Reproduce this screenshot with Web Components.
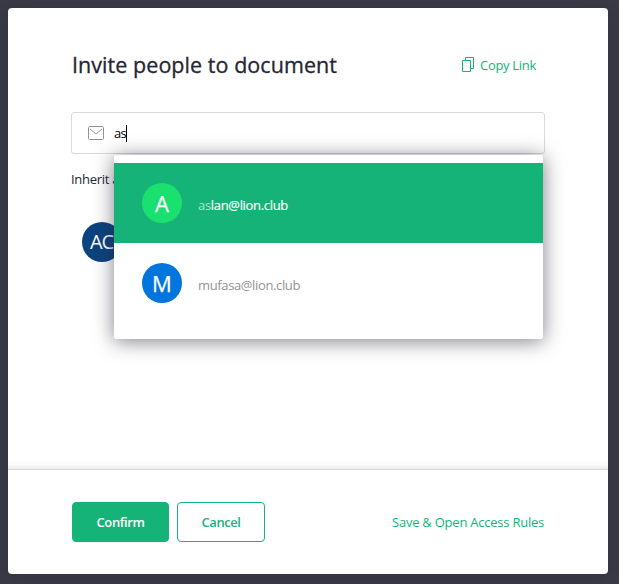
<!DOCTYPE html>
<html lang="en">
<head>
<meta charset="utf-8">
<title>Invite people to document</title>
<style>
body{margin:0;height:584px;overflow:hidden;background:#3b3a47;font:13px/18px "Open Sans","Noto Sans",sans-serif;color:#262633;--green:#16b378}
</style>
</head>
<body>
<invite-dialog></invite-dialog>
<script>
const define=(name,html,init)=>customElements.define(name,class extends HTMLElement{
  connectedCallback(){
    if(this.shadowRoot)return;
    const t=document.createElement('template');
    t.innerHTML=html;
    this.attachShadow({mode:'open'}).append(t.content.cloneNode(true));
    if(init)init.call(this,this.shadowRoot);
  }
});

// A single line of text, tracked so that it fills the given width.
define('fit-text',`<style>
:host{display:inline-block;white-space:pre}
span{display:inline-block}
</style><span><slot></slot></span>`,function(root){
  const span=root.querySelector('span');
  const target=+this.getAttribute('width');
  const natural=span.getBoundingClientRect().width;
  span.style.letterSpacing=(target-natural)/this.textContent.length+'px';
  this.style.width=target+'px';
});

define('user-avatar',`<style>
:host{display:flex;flex:none;align-items:center;justify-content:center;box-sizing:border-box;width:40px;height:40px;border-radius:50%;background:var(--tint);color:#fff;font-size:22px;line-height:40px;-webkit-text-stroke:.25px}
:host([pair]){font-size:20px;letter-spacing:-1px;padding-right:1px;-webkit-text-stroke:0}
</style><slot></slot>`);

define('copy-link',`<style>
:host{display:flex;align-items:center;gap:5px;color:var(--green)}
svg{display:block}
</style><svg width="13" height="16" viewBox="0 0 13 16" fill="none" stroke="currentColor"><path d="M.5 3.500h8v11h-8zM3.500 3.500v-3h8v11h-3"/></svg><fit-text width="56">Copy Link</fit-text>`);

define('email-field',`<style>
:host{display:flex;align-items:center;box-sizing:border-box;width:474px;height:42px;border:1px solid #d9d9d9;border-radius:3px;padding-left:16px;color:#000}
svg{display:block;margin-right:10px}
i{width:1px;height:17px;background:#000}
</style><svg width="16" height="14" viewBox="0 0 16 14" fill="none" stroke="#929299"><rect x=".5" y=".5" width="15" height="13" rx="1"/><path d="M2 3l6 5 6-5"/></svg><fit-text width="12">as</fit-text><i></i>`);

define('suggestion-row',`<style>
:host{display:flex;height:80px;box-sizing:border-box;padding:20px 28px;gap:16px;color:#929299}
:host([selected]){background:var(--green);color:#fff}
</style><slot name="avatar"></slot><div style="padding-top:13px"><slot></slot></div>`);

define('suggestion-menu',`<style>
:host{display:block;position:absolute;z-index:1;left:106px;top:147px;width:429px;height:184px;box-sizing:border-box;padding-top:8px;background:#fff;border-radius:2px;box-shadow:0 2px 20px 0 rgba(38,38,51,.6)}
b{font-weight:400;color:#aee6cf}
strong{font-weight:400;-webkit-text-stroke:.15px}
</style>
<suggestion-row selected><user-avatar slot="avatar" style="--tint:#1ae070">A</user-avatar><fit-text width="90"><b>as</b><strong>lan@lion.club</strong></fit-text></suggestion-row>
<suggestion-row><user-avatar slot="avatar" style="--tint:#0075dd">M</user-avatar><fit-text width="102">mufasa@lion.club</fit-text></suggestion-row>`);

define('action-button',`<style>
:host{display:flex;align-items:center;justify-content:center;box-sizing:border-box;height:40px;border:1px solid var(--green);border-radius:4px;color:var(--green);font-weight:600}
:host([primary]){background:var(--green);color:#fff}
</style><slot></slot>`);

define('invite-dialog',`<style>
:host{display:flex;flex-direction:column;position:relative;box-sizing:border-box;width:600px;height:566px;margin:8px;border-radius:4px;background:#fff;box-shadow:0 2px 18px rgba(31,37,50,.31)}
main{flex:1;padding:0 63px;box-shadow:inset 0 -8px 8px -7px rgba(0,0,0,.12)}
header{display:flex;justify-content:space-between;align-items:center;height:104px;padding:10px 9px 0 1px;box-sizing:border-box}
h1{margin:0;font-size:21.5px;line-height:30px;font-weight:400;-webkit-text-stroke:.3px}
.inherit{margin-top:16px;height:20px}
.member{padding:32px 11px 0}
footer{display:flex;gap:8px;height:105px;box-sizing:border-box;border-top:1px solid #d9d9d9;padding:32px 64px}
.rules{margin-left:auto;height:40px;display:flex;align-items:center;color:var(--green)}
</style>
<main>
<header><h1><fit-text width="265">Invite people to document</fit-text></h1><copy-link></copy-link></header>
<email-field></email-field>
<div class="inherit"><fit-text width="79">Inherit access</fit-text></div>
<div class="member"><user-avatar pair style="--tint:#0b437f">AC</user-avatar></div>
</main>
<footer><action-button primary style="width:97px"><fit-text width="48">Confirm</fit-text></action-button><action-button style="width:88px"><fit-text width="39">Cancel</fit-text></action-button><div class="rules"><fit-text width="152">Save &amp; Open Access Rules</fit-text></div></footer>
<suggestion-menu></suggestion-menu>`);
</script>
</body>
</html>
